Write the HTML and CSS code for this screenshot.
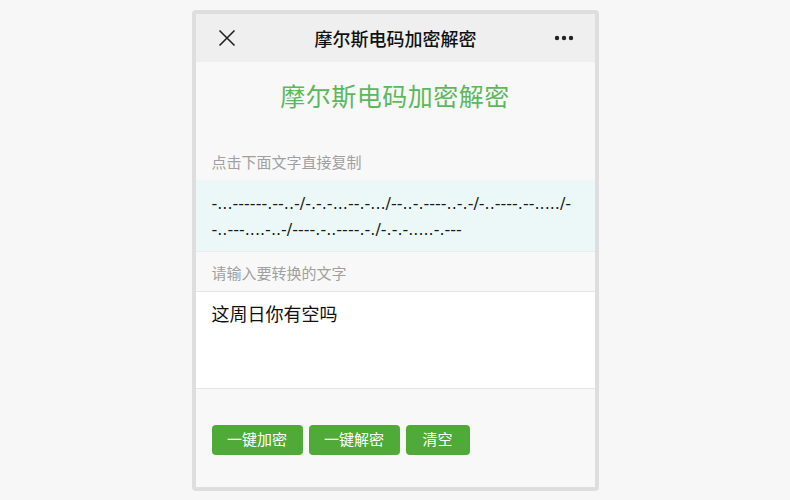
FILE: index.html
```html
<!DOCTYPE html>
<html lang="zh-CN">
<head>
  <meta charset="UTF-8">
  <title>摩尔斯电码加密解密</title>
  <link rel="stylesheet" href="styles.css">
</head>
<body>
  <div class="phone">
    <div class="nav">
      <span class="nav-close">
        <svg width="18" height="18" viewBox="0 0 18 18"><path d="M1.5 1.5 L16.5 16.5 M16.5 1.5 L1.5 16.5" stroke="#222" stroke-width="1.6" fill="none"/></svg>
      </span>
      <span class="nav-title">摩尔斯电码加密解密</span>
      <span class="nav-more">
        <svg width="20" height="6" viewBox="0 0 20 6"><circle cx="3" cy="3" r="2.2" fill="#222"/><circle cx="10" cy="3" r="2.2" fill="#222"/><circle cx="17" cy="3" r="2.2" fill="#222"/></svg>
      </span>
    </div>

    <h1 class="title">摩尔斯电码加密解密</h1>

    <div class="tip tip-first">点击下面文字直接复制</div>
    <div class="morse">-...------.--..-/-.-.-...--.-.../--..-.----..-.-/-..----.--...../--..---....-..-/----.-..----.-./-.-.-.....-.---</div>

    <div class="tip tip-second">请输入要转换的文字</div>
    <div class="input">这周日你有空吗</div>

    <div class="btns">
      <span class="btn btn-wide">一键加密</span>
      <span class="btn btn-wide">一键解密</span>
      <span class="btn">清空</span>
    </div>
  </div>
</body>
</html>
```

FILE: styles.css
```css
body {
  margin: 0;
  background-color: #f7f7f7;
  font-family: Roboto, "Noto Sans CJK SC", sans-serif;
}

.phone {
  width: 399px;
  height: 473px;
  margin: 10px auto 0;
  border: 4px solid #dedede;
  border-radius: 4px;
  background-color: #f8f8f8;
}

.nav {
  height: 48px;
  background-color: #efefef;
  display: flex;
  align-items: center;
  justify-content: space-between;
  padding: 0 21px 0 22px;
}

.nav-close,
.nav-more {
  width: 30px;
  display: flex;
  align-items: center;
}

.nav-more {
  justify-content: flex-end;
}

.nav-title {
  font-size: 18px;
  font-weight: 500;
  color: #111;
}

.title {
  margin: 18px 0 0;
  height: 36px;
  line-height: 36px;
  text-align: center;
  font-size: 25px;
  font-weight: normal;
  color: #5cb85c;
  letter-spacing: 0.5px;
}

.tip {
  font-size: 15px;
  line-height: 20px;
  color: #a0a0a0;
  padding: 0 16px;
}

.tip-first {
  padding-top: 37px;
  padding-bottom: 7px;
}

.tip-second {
  padding-top: 12px;
  padding-bottom: 7px;
}

.morse {
  padding: 11px 20px 8px 16px;
  height: 52px;
  line-height: 26px;
  font-family: "DejaVu Sans", sans-serif;
  font-size: 16px;
  color: #1a1a1a;
  background-color: #ecf8f7;
  border-bottom: 1px solid #e6eeee;
  word-break: break-all;
}

.input {
  height: 86px;
  padding: 10px 16px 0;
  font-size: 18px;
  line-height: 26px;
  color: #111;
  background-color: #fff;
  border-top: 1px solid #e6e6e6;
  border-bottom: 1px solid #e6e6e6;
}

.btns {
  display: flex;
  gap: 6px;
  padding: 36px 16px 0;
}

.btn {
  width: 64px;
  height: 30px;
  line-height: 30px;
  text-align: center;
  font-size: 15px;
  color: #fff;
  background-color: #4faa38;
  border-radius: 4px;
}

.btn-wide {
  width: 91px;
}
```
